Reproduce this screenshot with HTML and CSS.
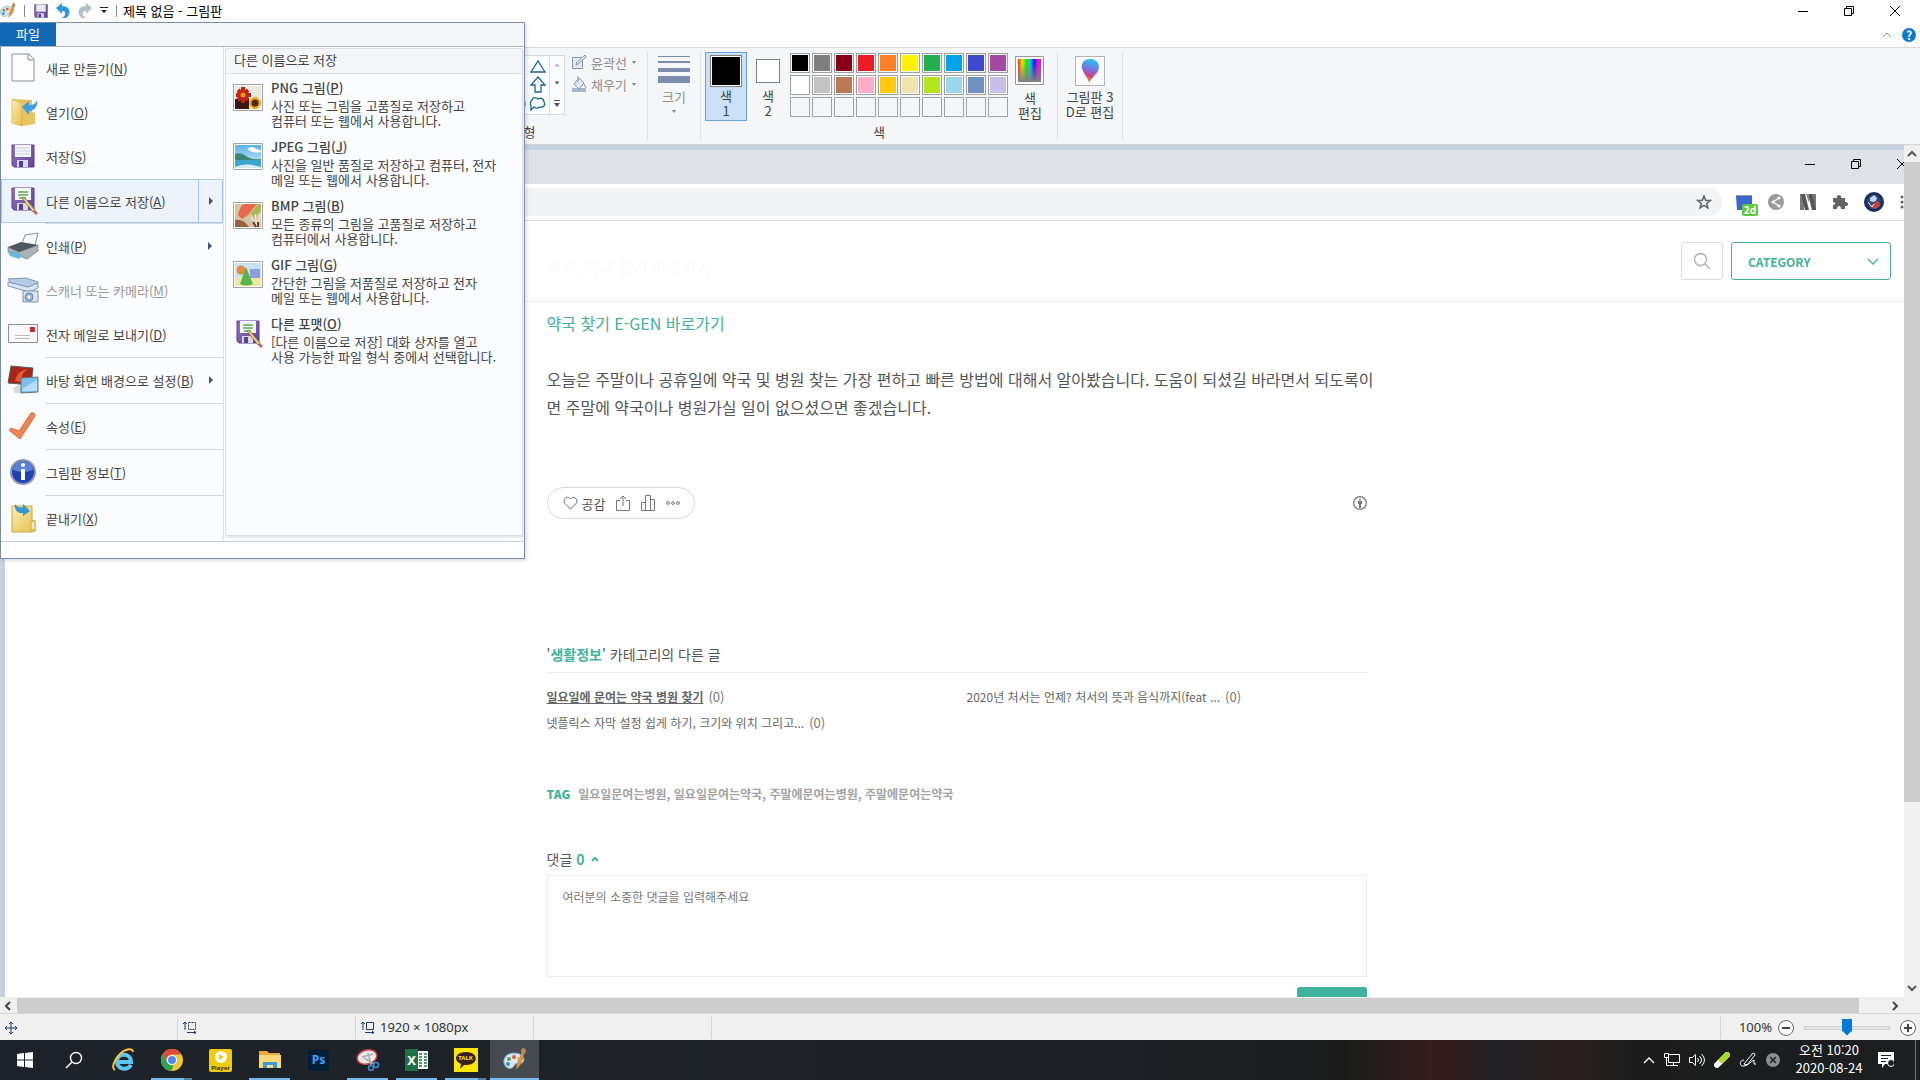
FILE: index.html
```
<!DOCTYPE html>
<html lang="ko">
<head>
  <meta charset="UTF-8" />
  <meta name="viewport" content="width=device-width, initial-scale=1" />
  <title>제목 없음 - 그림판</title>
  <link rel="stylesheet" href="styles.css">
</head>
<body>
  <!-- shared icons -->
  <svg class="defs" aria-hidden="true">
    <defs>
      <linearGradient id="violet" x1="0" y1="0" x2="1" y2="1">
        <stop offset="0" stop-color="#9474bd" /><stop offset="1" stop-color="#60449a" />
      </linearGradient>
      <linearGradient id="yellow" x1="0" y1="0" x2="1" y2="1">
        <stop offset="0" stop-color="#fbeeb0" /><stop offset="1" stop-color="#e5bf50" />
      </linearGradient>
      <linearGradient id="sky" x1="0" y1="0" x2="0" y2="1">
        <stop offset="0" stop-color="#5ab2e6" /><stop offset="1" stop-color="#d9f1fa" />
      </linearGradient>
      <linearGradient id="rainbow">
        <stop offset="0" stop-color="#f03020" /><stop offset=".18" stop-color="#f0e000" />
        <stop offset=".36" stop-color="#20e020" /><stop offset=".54" stop-color="#10c8d8" />
        <stop offset=".7" stop-color="#1818f0" /><stop offset=".88" stop-color="#f010e0" />
        <stop offset="1" stop-color="#f02060" />
      </linearGradient>
      <linearGradient id="fade" x1="0" y1="0" x2="0" y2="1">
        <stop offset=".2" stop-color="#808080" stop-opacity="0" /><stop offset="1" stop-color="#808080" />
      </linearGradient>
      <linearGradient id="drop" x1=".6" y1="0" x2=".4" y2="1">
        <stop offset="0" stop-color="#20c8f0" /><stop offset=".45" stop-color="#7a70e0" />
        <stop offset=".7" stop-color="#d04080" /><stop offset="1" stop-color="#f8a020" />
      </linearGradient>
      <symbol id="floppy" viewBox="0 0 24 24">
        <path d="M1 1h22v22H3l-2-2z" fill="url(#violet)" stroke="#5a3f91" />
        <path d="M4 1h16v12H4z" fill="#f3f5f8" />
        <path d="M5 4h14M5 7h14M5 10h14" stroke="#ccd2dc" />
        <path d="M6 16h11v7H6z" fill="#d8d8e2" />
        <path d="M8 17h4v6H8z" fill="#5a3f91" />
      </symbol>
      <symbol id="floppy-pen" viewBox="0 0 28 28">
        <path d="M1 1h22v22H3l-2-2z" fill="url(#violet)" stroke="#5a3f91" />
        <path d="M4 1h16v12H4z" fill="#f3f5f8" />
        <path d="M7 5h10M7 8h10M8 11h7" stroke="#5cae4a" stroke-width="1.5" />
        <path d="M6 16h11v7H6z" fill="#d8d8e2" />
        <path d="M8 17h4v6H8z" fill="#5a3f91" />
        <path d="M11 11l3 0 10 12-2 2z" fill="#f3d27a" stroke="#75603a" stroke-width=".7" />
        <path d="M22 25l2-2 3 3-2 2z" fill="#c86070" />
      </symbol>
      <symbol id="paint" viewBox="0 0 24 24">
        <path d="M11 5C4 5 0 10 1 15c1 6 8 7 10 3 1-3 3-2 6-2 6-1 6-11-6-11z" fill="#d5e8f3" stroke="#7ba6c0" />
        <circle cx="6" cy="11" r="2" fill="#4aa845" /><circle cx="11" cy="9" r="2" fill="#e25a3c" />
        <circle cx="5" cy="16" r="2" fill="#3a88d0" /><circle cx="16" cy="11" r="2" fill="#f0b030" />
        <path d="M19 2l3 1-3 9c-1 5-4 8-6 9 1-3 1-7 4-10z" fill="#e9973b" stroke="#a96b2e" stroke-width=".6" />
        <path d="M18 3q0-3 3-3 2 1 2 4l-3 3z" fill="#b98b5a" />
      </symbol>
      <symbol id="restore" viewBox="0 0 12 12">
        <path d="M1.500 3.500h7v7h-7zM3.500 3.500v-2h7v7h-2" fill="none" stroke="#000" />
      </symbol>
      <symbol id="minimize" viewBox="0 0 12 12"><path d="M1 6.500h10" stroke="#000" /></symbol>
      <symbol id="close" viewBox="0 0 12 12"><path d="M1 1l10 10M11 1L1 11" stroke="#000" /></symbol>
      <symbol id="down" viewBox="0 0 8 4"><path d="M1 0h6L4 4z" fill="currentColor" /></symbol>
      <symbol id="right" viewBox="0 0 4 8"><path d="M0 0v8l4-4z" fill="#44546a" /></symbol>
    </defs>
  </svg>

  <header class="titlebar">
    <div class="quick">
      <svg class="app-icon" viewBox="0 0 24 24"><use href="#paint" /></svg>
      <span class="bar"></span>
      <button aria-label="저장"><svg width="14" height="14"><use href="#floppy" /></svg></button>
      <button aria-label="실행 취소"><svg width="14" height="15" viewBox="0 0 14 15"><path d="M0 5l6-5v3c8 0 10 8 4 12H5c6-2 5-8 1-7v3z" fill="#2f97dc" /></svg></button>
      <button aria-label="다시 실행"><svg width="14" height="15" viewBox="0 0 14 15"><path d="M14 5L8 0v3C0 3-2 11 4 15h5C3 13 4 7 8 8v3z" fill="#b3bfcb" /></svg></button>
      <button aria-label="사용자 지정"><svg width="8" height="7" viewBox="0 0 8 7"><path d="M0 .5h8" stroke="#222" /><path d="M1 3h6L4 6z" fill="#222" /></svg></button>
      <span class="bar"></span>
    </div>
    <h1>제목 없음 - 그림판</h1>
    <div class="window-buttons">
      <button aria-label="최소화"><svg width="12" height="12"><use href="#minimize" /></svg></button>
      <button aria-label="이전 크기로"><svg width="12" height="12"><use href="#restore" /></svg></button>
      <button aria-label="닫기"><svg width="12" height="12"><use href="#close" /></svg></button>
    </div>
  </header>

  <div class="tabs">
    <svg width="10" height="6" viewBox="0 0 10 6"><path d="M1 5l4-4 4 4" fill="none" stroke="#8a8a8a" /></svg>
    <button class="help">?</button>
  </div>

  <section class="ribbon">
    <div class="group shapes">
      <div class="group-body">
        <div class="gallery">
          <svg width="125" height="58" viewBox="0 0 125 58" fill="#f4faff" stroke="#1f639b" stroke-width="1.3">
            <path d="M85 10h15v7H85zM85 25h15v9H85z" />
            <circle cx="94" cy="48" r="7" />
            <path d="M107 16h14L114 5zM114 21l7 8h-4v7h-6v-7h-4zM108 44c1-3 4-3 6-1 3-2 6 0 6 3 2 3-1 6-4 5-3 2-5 1-6 0l-3 3v-4c-1-2-1-4 1-6z" />
          </svg>
          <div class="gallery-scroll">
            <svg class="faint" width="6" height="4" viewBox="0 0 8 4"><path d="M0 4h8L4 0z" fill="currentColor" /></svg>
            <svg width="6" height="4"><use href="#down" /></svg>
            <svg width="6" height="7" viewBox="0 0 6 7"><path d="M0 .5h6" stroke="currentColor" /><path d="M0 3h6L3 7z" fill="currentColor" /></svg>
          </div>
        </div>
        <div class="shape-options">
          <button disabled><svg width="16" height="16" viewBox="0 0 16 16" fill="#e4e9f0" stroke="#8794a8"><path d="M1.500 3.500h10v11h-10z" /><path d="M5 11l1-3 8-7 1 2-8 7z" /></svg>윤곽선<svg width="6" height="3"><use href="#down" /></svg></button>
          <button disabled><svg width="16" height="16" viewBox="0 0 16 16"><path d="M1 12h14v4H1z" fill="#a8b4c8" /><path d="M3 8l5-6 5 5-5 6z" fill="#e4e9f0" stroke="#8794a8" /><path d="M7 0v6M13 8l2 4" stroke="#8794a8" /></svg>채우기<svg width="6" height="3"><use href="#down" /></svg></button>
        </div>
      </div>
      <p class="group-name">도형</p>
    </div>

    <div class="group size">
      <button class="tool" disabled>
        <svg width="32" height="28" viewBox="0 0 32 28" fill="#7c8daf"><path d="M0 0h32v1H0zM0 5h32v2H0zM0 12h32v4H0zM0 20h32v7H0z" /></svg>
        <span>크기</span>
        <svg class="size-arrow" width="6" height="3"><use href="#down" /></svg>
      </button>
    </div>

    <div class="group colors">
      <div class="group-body">
        <button class="color-pick active"><i class="swatch black"></i><span>색<br>1</span></button>
        <button class="color-pick"><i class="swatch white"></i><span>색<br>2</span></button>
        <div class="palette" id="palette"></div>
        <button class="tool">
          <svg width="30" height="30" viewBox="0 0 30 30"><path d="M.5.5h28v28H.5z" fill="#fff" stroke="#999" /><path d="M3 3h23v23H3z" fill="url(#rainbow)" /><path d="M3 3h23v23H3z" fill="url(#fade)" /></svg>
          <span>색<br>편집</span>
        </button>
      </div>
      <p class="group-name">색</p>
    </div>

    <div class="group paint3d">
      <button class="tool">
        <svg width="30" height="30" viewBox="0 0 30 30"><path d="M.5.5h29v29H.5z" fill="#fbfbfb" stroke="#b4b4b4" /><path d="M15 3c10 0 11 10 6 15-3 3-5 5-7 9-1-5-3-6-5-10C4 9 8 3 15 3z" fill="url(#drop)" /></svg>
        <span>그림판 3<br>D로 편집</span>
      </button>
    </div>
  </section>

  <main class="workspace">
    <div class="canvas">
      <div class="browser">
        <div class="browser-title">
          <svg width="12" height="12"><use href="#minimize" /></svg>
          <svg width="12" height="12"><use href="#restore" /></svg>
          <svg width="12" height="12"><use href="#close" /></svg>
        </div>
        <div class="browser-tools">
          <div class="address">
            <svg width="16" height="16" viewBox="0 0 16 16"><path d="M8 2l1.700 4.200 4.500.3-3.500 2.900 1.200 4.400L8 11.400l-3.900 2.400 1.200-4.400L1.800 6.500l4.500-.3z" fill="none" stroke="#5f6368" stroke-width="1.500" /></svg>
          </div>
          <div class="extensions">
            <span class="ext-date">
              <svg width="16" height="16" viewBox="0 0 16 16"><path d="M0 2h16v14H1z" fill="#3867d0" /><path d="M0 1h16v1H0z" fill="#999" /></svg>
              <b>2d</b>
            </span>
            <svg width="16" height="16" viewBox="0 0 16 16"><circle cx="8" cy="8" r="8" fill="#9b9b9b" /><path d="M11 4L5 8l6 4" fill="none" stroke="#fff" stroke-width="1.300" /><g fill="#fff"><circle cx="11" cy="4" r="1.500" /><circle cx="5" cy="8" r="1.500" /><circle cx="11" cy="12" r="1.500" /></g></svg>
            <svg width="16" height="16" viewBox="0 0 16 16"><path d="M0 0h4v16H0zM12 0h4v16h-4z" fill="#777" /><path d="M1 0h4l4 16H5zM8 0h4l4 16h-4z" fill="#555" /><path d="M6 0h3v9z" fill="#888" /></svg>
            <svg width="16" height="16" viewBox="0 0 16 16"><path d="M1 4h4c-1-4 5-4 4 0h4v4c4-1 4 5 0 4v3H9c0-4-4-4-4 0H1v-4c3 0 3-3 0-3z" fill="#5f6368" /></svg>
            <svg width="20" height="20" viewBox="0 0 20 20"><circle cx="10" cy="10" r="10" fill="#17305f" /><circle cx="10" cy="10" r="7" fill="#28497e" /><path d="M6 6l4-3 3 3-1 3-3 1-3-1z" fill="#c9d6ea" /><path d="M10 11l5-2 1 5-5 3-5-2z" fill="#c8453f" /><path d="M4 10l4 5 2-3" fill="none" stroke="#dfe7f2" /></svg>
            <svg width="4" height="16" viewBox="0 0 4 16" fill="#5f6368"><circle cx="2" cy="3" r="1.500" /><circle cx="2" cy="8" r="1.500" /><circle cx="2" cy="13" r="1.500" /></svg>
          </div>
        </div>

        <div class="blog-header">
          <p class="blog-title">병원, 약국 찾기 바로가기</p>
          <div class="blog-nav">
            <button class="search" aria-label="검색"><svg width="18" height="18" viewBox="0 0 18 18" fill="none" stroke="#aaa" stroke-width="1.300"><circle cx="7.500" cy="7.500" r="6" /><path d="M12 12l5 5" /></svg></button>
            <label class="category">
              <select aria-label="카테고리"><option>CATEGORY</option></select>
              <svg width="12" height="8" viewBox="0 0 12 8"><path d="M1 1l5 5 5-5" fill="none" stroke="#42b299" stroke-width="1.300" /></svg>
            </label>
          </div>
        </div>

        <article class="post">
          <a class="post-link" href="#">약국 찾기 E-GEN 바로가기</a>
          <p class="post-text">오늘은 주말이나 공휴일에 약국 및 병원 찾는 가장 편하고 빠른 방법에 대해서 알아봤습니다. 도움이 되셨길 바라면서 되도록이<br>면 주말에 약국이나 병원가실 일이 없으셨으면 좋겠습니다.</p>

          <div class="post-actions">
            <div class="pill">
              <button><svg width="15" height="14" viewBox="0 0 15 14"><path d="M7.500 13L2 7.500C-1 4 4-1.500 7.500 3 11-1.500 16 4 13 7.500z" fill="none" stroke="#666" /></svg>공감</button>
              <button aria-label="공유"><svg width="14" height="16" viewBox="0 0 14 16" fill="none" stroke="#777"><path d="M4 5.500H.5v10h13v-10H10M7 11V1M4 4l3-3 3 3" /></svg></button>
              <button aria-label="통계"><svg width="14" height="16" viewBox="0 0 14 16" fill="none" stroke="#777"><path d="M.5 7.500h4v8h-4zM4.500.5h5v15h-5zM9.500 4.500h4v11h-4z" /></svg></button>
              <button aria-label="더보기"><svg width="14" height="4" viewBox="0 0 14 4" fill="none" stroke="#777"><circle cx="2" cy="2" r="1.400" /><circle cx="7" cy="2" r="1.400" /><circle cx="12" cy="2" r="1.400" /></svg></button>
            </div>
            <svg width="14" height="14" viewBox="0 0 14 14"><circle cx="7" cy="7" r="6.300" fill="none" stroke="#777" stroke-width="1.300" /><circle cx="7" cy="3.500" r="1" fill="#777" /><path d="M5 5h4v3H8v4H6V8H5z" fill="#777" /></svg>
          </div>

          <h2 class="related-title">'<b>생활정보</b>' 카테고리의 다른 글</h2>
          <ul class="related">
            <li><a class="current" href="#">일요일에 문여는 약국 병원 찾기</a><span>(0)</span></li>
            <li><a href="#">2020년 처서는 언제? 처서의 뜻과 음식까지(feat ...</a><span>(0)</span></li>
            <li><a href="#">넷플릭스 자막 설정 쉽게 하기, 크기와 위치 그리고...</a><span>(0)</span></li>
          </ul>

          <p class="tags"><b>TAG</b>일요일문여는병원, 일요일문여는약국, 주말에문여는병원, 주말에문여는약국</p>

          <form class="comments">
            <label for="comment">댓글 <b>0</b> <svg width="8" height="6" viewBox="0 0 8 6"><path d="M1 5l3-3 3 3" fill="none" stroke="#42b299" stroke-width="2" /></svg></label>
            <textarea id="comment" placeholder="여러분의 소중한 댓글을 입력해주세요"></textarea>
            <button type="submit" aria-label="댓글 등록"></button>
          </form>
        </article>
      </div>
    </div>
    <div class="vscroll">
      <svg width="16" height="17" viewBox="0 0 16 17"><path d="M4 11l4-4 4 4" fill="none" stroke="#555" stroke-width="2" /></svg>
      <div class="thumb"></div>
      <svg width="16" height="17" viewBox="0 0 16 17"><path d="M4 6l4 4 4-4" fill="none" stroke="#555" stroke-width="2" /></svg>
    </div>
  </main>

  <div class="hscroll">
    <svg width="17" height="15" viewBox="0 0 17 15"><path d="M10 4L6 8l4 4" fill="none" stroke="#444" stroke-width="2" /></svg>
    <div class="thumb"></div>
    <svg width="17" height="15" viewBox="0 0 17 15"><path d="M6 4l4 4-4 4" fill="none" stroke="#444" stroke-width="2" /></svg>
  </div>

  <footer class="status">
    <div class="cell"><svg width="12" height="12" viewBox="0 0 12 12" fill="none" stroke="#1f3864"><path d="M6 0v12M0 6h12M4 2l2-2 2 2M4 10l2 2 2-2M2 4L0 6l2 2M10 4l2 2-2 2" /></svg></div>
    <div class="cell"><svg width="14" height="13" viewBox="0 0 14 13" fill="none" stroke="#1f3864"><path d="M2 9V1M0 3l2-2 2 2M4 11.500h9M11 10l2 1.500-2 1.500" /><path d="M5.500 1.500h7v7h-7z" stroke-dasharray="2 1" /></svg></div>
    <div class="cell"><svg width="14" height="13" viewBox="0 0 14 13" fill="none" stroke="#1f3864"><path d="M2 9V1M0 3l2-2 2 2M4 11.500h9M11 10l2 1.500-2 1.500M5.500 1.500h7v7h-7z" /></svg>1920 × 1080px</div>
    <div class="cell"></div>
    <div class="zoom">
      <label for="zoom">100%</label>
      <button type="button" aria-label="축소"><svg width="16" height="16" viewBox="0 0 16 16"><circle cx="8" cy="8" r="7.500" fill="#fafafa" stroke="#666" /><path d="M4 8h8" stroke="#444" stroke-width="2" /></svg></button>
      <input type="range" id="zoom" min="0" max="100" value="50">
      <button type="button" aria-label="확대"><svg width="16" height="16" viewBox="0 0 16 16"><circle cx="8" cy="8" r="7.500" fill="#fafafa" stroke="#666" /><path d="M4 8h8M8 4v8" stroke="#444" stroke-width="2" /></svg></button>
    </div>
  </footer>

  <nav class="taskbar">
    <div class="tasks">
      <button aria-label="시작"><svg width="16" height="16" viewBox="0 0 16 16" fill="#fff"><path d="M0 2l7-1v6.500H0zM8 1l8-1v7.500H8zM0 8.500h7V15l-7-1zM8 8.500h8V16l-8-1z" /></svg></button>
      <button aria-label="검색"><svg width="18" height="18" viewBox="0 0 18 18" fill="none" stroke="#fff" stroke-width="1.400"><circle cx="11" cy="7" r="5.500" /><path d="M7 11l-6 6" /></svg></button>
      <button aria-label="Internet Explorer"><svg width="24" height="24" viewBox="0 0 24 24" fill="none"><path d="M20 17c-3 6-14 5-14-4 0-8 14-9 14 1H7" stroke="#5cc4f2" stroke-width="4" /><path d="M4 22C0 20 3 12 9 6S22 0 22 4" stroke="#f4c430" stroke-width="2" /></svg></button>
      <button class="open more" aria-label="Chrome"><svg width="22" height="22" viewBox="0 0 22 22"><circle cx="11" cy="11" r="11" fill="#f4c534" /><path d="M1.500 5.500a11 11 0 0 1 19 0H11a5.500 5.500 0 0 0-5 8z" fill="#dd4b3e" /><path d="M1.500 5.500l5 8.500a5 5 0 0 0 6 2L10.500 22A11 11 0 0 1 1.500 5.500z" fill="#2da05a" /><circle cx="11" cy="11" r="5" fill="#fff" /><circle cx="11" cy="11" r="4" fill="#4c8bf5" /></svg></button>
      <button aria-label="Player"><span class="player"><svg width="12" height="12" viewBox="0 0 12 12"><circle cx="6" cy="6" r="6" fill="#fff" /><path d="M4 3v6l5-3z" fill="#f5c900" /></svg>Player</span></button>
      <button class="open" aria-label="파일 탐색기"><svg width="22" height="20" viewBox="0 0 22 20"><path d="M0 1h8l2 2h11v15H0z" fill="#e9a93a" /><path d="M0 5h22v13H0z" fill="#fbd978" /><path d="M4 18v-6h14v6h-4v-3H8v3z" fill="#3f9bd8" /></svg></button>
      <button aria-label="Photoshop"><span class="ps">Ps</span></button>
      <button class="open" aria-label="캡처 도구"><svg width="24" height="24" viewBox="0 0 24 24"><ellipse cx="11" cy="9" rx="10" ry="7" transform="rotate(-15 11 9)" fill="#ece9ea" stroke="#d23a46" stroke-width="1.500" /><path d="M6 9l11-3M12 5l3 12M8 10l10 6" stroke="#aaa" stroke-width="1.500" /><circle cx="15" cy="20" r="2.500" fill="none" stroke="#3a8ed0" stroke-width="1.500" /><circle cx="20" cy="17" r="2.500" fill="none" stroke="#3a8ed0" stroke-width="1.500" /></svg></button>
      <button class="open" aria-label="Excel"><span class="excel"><b>X</b><svg width="10" height="18" viewBox="0 0 10 18"><path d="M0 0h10v18H0z" fill="#fff" /><path d="M1 3h3M6 3h3M1 6h3M6 6h3M1 9h3M6 9h3M1 12h3M6 12h3M1 15h3M6 15h3" stroke="#1f7244" stroke-width="1.500" /></svg></span></button>
      <button class="open more" aria-label="카카오톡"><span class="talk"><svg width="20" height="17" viewBox="0 0 20 17"><path d="M10 0c13 0 13 13 0 13h-2l-4 4 1-5C-4 8 0 0 10 0z" fill="#3b1e1e" /></svg><b>TALK</b></span></button>
      <button class="open active" aria-label="그림판"><svg width="24" height="24"><use href="#paint" /></svg></button>
    </div>
    <div class="tray">
      <svg width="12" height="8" viewBox="0 0 12 8"><path d="M1 7l5-5 5 5" fill="none" stroke="#fff" stroke-width="1.300" /></svg>
      <svg width="16" height="14" viewBox="0 0 16 14" fill="none" stroke="#fff"><path d="M4.500 1.500h11v8h-11zM9.500 9.500v3M6 12.500h8M.5.500h4v4h-4zM2.500 4.500v8h3" /></svg>
      <svg width="16" height="14" viewBox="0 0 16 14" fill="none" stroke="#fff"><path d="M.5 4.500h3l3-3v11l-3-3h-3zM8.500 5q2 2 0 4M10.500 3q4 4 0 8M12.500 1q6 6 0 12" /></svg>
      <svg width="16" height="16" viewBox="0 0 16 16"><path d="M3 13L13 3" stroke="#f4f4f4" stroke-width="6" stroke-linecap="round" /><path d="M8 8l5-5" stroke="#a4dc28" stroke-width="6" stroke-linecap="round" /></svg>
      <svg width="18" height="16" viewBox="0 0 18 16" fill="none" stroke="#fff"><path d="M5 12L13 2q3-2 3 1L8 13zM5 8c-5 0-5 7 0 6s6-4 10-6v4h2" /></svg>
      <svg width="14" height="14" viewBox="0 0 14 14"><circle cx="7" cy="7" r="7" fill="#8d8f92" /><path d="M4 4l6 6M10 4l-6 6" stroke="#1e2124" stroke-width="1.500" /></svg>
      <time datetime="2020-08-24T10:20">오전 10:20<br>2020-08-24</time>
      <svg width="16" height="16" viewBox="0 0 16 16"><path d="M0 0h16v12H7l-3 4v-4H0z" fill="#fff" /><path d="M3 3.500h10M3 6.500h7M3 9.500h5" stroke="#1c1e20" /><circle cx="13" cy="11" r="3.500" fill="#1c1e20" stroke="#fff" /></svg>
      <span class="desktop"></span>
    </div>
  </nav>

  <!-- file menu, opened over the window -->
  <div class="file-menu">
    <div class="file-head"><button>파일</button></div>
    <div class="file-body">
      <ul class="commands">
        <li><button><svg width="32" height="30" viewBox="0 0 32 30"><path d="M5 1h17l5 5v22H5z" fill="#fdfdfd" stroke="#8e9296" /><path d="M21 1v6h6" fill="#eee" stroke="#8e9296" /></svg><span>새로 만들기(<u>N</u>)</span></button></li>
        <li><button><svg width="32" height="30" viewBox="0 0 32 30"><path d="M5 2l20 1v12l3 1v11l-13 2z" fill="#e7c45c" /><path d="M5 2l10 4v23L5 26z" fill="url(#yellow)" stroke="#c9a246" stroke-width=".6" /><path d="M15 10l7-6v4c5 0 7-2 8-5 1 7-3 11-8 11v4z" fill="#3f9fe0" /></svg><span>열기(<u>O</u>)</span></button></li>
        <li><button><svg width="32" height="24" viewBox="-4 0 32 24"><use href="#floppy" width="24" height="24" /></svg><span>저장(<u>S</u>)</span></button></li>
        <li class="open"><button><svg width="32" height="28" viewBox="-4 0 32 28"><use href="#floppy-pen" width="28" height="28" /></svg><span>다른 이름으로 저장(<u>A</u>)</span><span class="arrow"><svg width="4" height="8"><use href="#right" /></svg></span></button></li>
        <li class="divided"><button><svg width="32" height="28" viewBox="0 0 32 28"><path d="M18 3l13-2-3 12-13-1z" fill="#f5f7f8" stroke="#8d9499" /><path d="M1 15l13-5 17 3-5 7-14 4z" fill="#50575c" /><path d="M1 15l11 5 19-7v6l-11 8L1 20z" fill="#aab3b8" stroke="#656d72" stroke-width=".6" /><path d="M1 20l6-1 8 4-3 4-9-3z" fill="#6fb4dc" /></svg><span>인쇄(<u>P</u>)</span><span class="arrow"><svg width="4" height="8"><use href="#right" /></svg></span></button></li>
        <li><button disabled><svg width="32" height="28" viewBox="0 0 32 28"><path d="M1 3l18-1 12 4-7 6L4 7z" fill="#b4cbe5" stroke="#8298b8" /><path d="M1 6l20 5 10-4v5l-9 4L1 10z" fill="#dbe5f0" stroke="#8298b8" /><path d="M16 15h15v11H16z" fill="#d8e3f0" stroke="#7e92b0" /><circle cx="22" cy="21" r="4" fill="#9db5d4" stroke="#6b83a8" /><circle cx="22" cy="21" r="1.500" fill="#fff" /></svg><span>스캐너 또는 카메라(<u>M</u>)</span></button></li>
        <li><button><svg width="32" height="20" viewBox="0 0 32 20"><path d="M1.500.5h29v18h-29z" fill="#fafafa" stroke="#8b8f94" /><path d="M23 3h5v5h-5z" fill="#cc2939" /><path d="M8 11.500h15M8 14.500h15" stroke="#bbb" /></svg><span>전자 메일로 보내기(<u>D</u>)</span></button></li>
        <li class="divided"><button><svg width="32" height="30" viewBox="0 0 32 30"><path d="M4 1l22 2-2 17-23-2z" fill="#a82619" stroke="#56606b" /><path d="M8 16c2-8 6-11 13-12-5 3-7 7-6 13z" fill="#e25a33" /><path d="M6 23l6-3 5 6-3 2H8z" fill="#d5dade" /><path d="M14 13l17-1v15l-17 1z" fill="#79c0f0" stroke="#66717b" /><path d="M15 24l15-9v11H15z" fill="#b5defa" /></svg><span>바탕 화면 배경으로 설정(<u>B</u>)</span><span class="arrow"><svg width="4" height="8"><use href="#right" /></svg></span></button></li>
        <li class="divided"><button><svg width="32" height="30" viewBox="0 0 32 30"><path d="M4 17q-2 1-1 3l10 8 15-23q0-4-4-3L12 20z" fill="#ee8658" stroke="#d9683a" /></svg><span>속성(<u>E</u>)</span></button></li>
        <li class="divided"><button><svg width="32" height="28" viewBox="0 0 32 28"><circle cx="16" cy="14" r="12" fill="#1e43b4" stroke="#8b98ae" stroke-width="2" /><path d="M6 12a10 9 0 0 1 20 0q-10 4-20 0z" fill="#5b80d8" /><circle cx="16" cy="7" r="2" fill="#fff" /><path d="M14 11h4v11h-4z" fill="#fff" /></svg><span>그림판 정보(<u>T</u>)</span></button></li>
        <li class="divided"><button><svg width="32" height="30" viewBox="0 0 32 30"><path d="M5 3h20v14l3 1v10l-3 1H5z" fill="url(#yellow)" stroke="#cda83e" /><path d="M24 18h4v9h-4z" fill="#f7ebb7" stroke="#cda83e" /><path d="M8 1c2 3 5 4 8 3V1l7 7-7 5v-3C11 11 7 7 8 1z" fill="#3795cf" /></svg><span>끝내기(<u>X</u>)</span></button></li>
      </ul>
      <div class="submenu">
        <h2>다른 이름으로 저장</h2>
        <button>
          <svg width="30" height="28" viewBox="0 0 30 28"><path d="M.5.500h29v26H.5z" fill="#fff" stroke="#a3a3a3" /><path d="M2 2h26v23H2z" fill="#e9ebe2" /><path d="M2 15h14v10H2z" fill="#3a1712" /><g stroke="#bf2414" stroke-width="4"><path d="M10 3v16M3 11h15M5 6l10 10M15 6L5 16" /></g><circle cx="10" cy="11" r="2.500" fill="#e49b26" /><g stroke="#f2a51f" stroke-width="4"><path d="M22 13v12M16 19h12M18 15l8 8M26 15l-8 8" /></g><circle cx="22" cy="19" r="3.500" fill="#4b2914" /></svg>
          <span><b>PNG 그림(<u>P</u>)</b>사진 또는 그림을 고품질로 저장하고<br>컴퓨터 또는 웹에서 사용합니다.</span>
        </button>
        <button>
          <svg width="30" height="28" viewBox="0 0 30 28"><path d="M.5.500h29v26H.5z" fill="#fff" stroke="#a3a3a3" /><path d="M2 2h26v23H2z" fill="url(#sky)" /><path d="M14 6q5-4 9 0 4 0 5 3-8 2-14-3z" fill="#fff" /><path d="M2 11q6-2 11 2t15 3v2H2z" fill="#3a8574" /><path d="M2 17h26v8H2z" fill="#3aa7cc" /><path d="M2 24q10-5 26 0v1H2z" fill="#d7eeee" /></svg>
          <span><b>JPEG 그림(<u>J</u>)</b>사진을 일반 품질로 저장하고 컴퓨터, 전자<br>메일 또는 웹에서 사용합니다.</span>
        </button>
        <button>
          <svg width="30" height="28" viewBox="0 0 30 28"><path d="M.5.500h29v26H.5z" fill="#fff" stroke="#a3a3a3" /><path d="M2 2h26v23H2z" fill="#d3c5a5" /><path d="M5 13C7 5 9 2 12 2h12l-9 11-6 4z" fill="#e8694c" /><path d="M16 14l9-12h3v7l-8 7z" fill="#a9b653" /><path d="M2 18q8-2 14 7H2z" fill="#9b6040" /><path d="M18 13l4 11M22 12l2 12M27 12l-2 12" stroke="#f2ead9" stroke-width="1.500" /><path d="M20 20l3 5M25 20v5" stroke="#72332a" stroke-width="2" /></svg>
          <span><b>BMP 그림(<u>B</u>)</b>모든 종류의 그림을 고품질로 저장하고<br>컴퓨터에서 사용합니다.</span>
        </button>
        <button>
          <svg width="30" height="28" viewBox="0 0 30 28"><path d="M.5.500h29v26H.5z" fill="#fff" stroke="#a3a3a3" /><path d="M2 2h26v23H2z" fill="#c9e2f3" /><path d="M2 16h26v9H2z" fill="#ebe7a5" /><path d="M17 8h10v9H17z" fill="#8e9be0" /><circle cx="8" cy="9" r="4.500" fill="#e58a3c" /><path d="M13 6l7 17q-7 3-13 0z" fill="#5bb447" /></svg>
          <span><b>GIF 그림(<u>G</u>)</b>간단한 그림을 저품질로 저장하고 전자<br>메일 또는 웹에서 사용합니다.</span>
        </button>
        <button>
          <svg width="30" height="28" viewBox="-3 0 30 28"><use href="#floppy-pen" width="28" height="28" /></svg>
          <span><b>다른 포맷(<u>O</u>)</b>[다른 이름으로 저장] 대화 상자를 열고<br>사용 가능한 파일 형식 중에서 선택합니다.</span>
        </button>
      </div>
    </div>
    <div class="file-foot"></div>
  </div>

  <script>
    const colors = [
      '#000000', '#7f7f7f', '#880015', '#ed1c24', '#ff7f27', '#fff200', '#22b14c', '#00a2e8', '#3f48cc', '#a349a4',
      '#ffffff', '#c3c3c3', '#b97a57', '#ffaec9', '#ffc90e', '#efe4b0', '#b5e61d', '#99d9ea', '#7092be', '#c8bfe7'
    ];
    const palette = document.getElementById('palette');

    for (let i = 0; i < 30; i++) {
      const cell = document.createElement('button');
      cell.setAttribute('aria-label', colors[i] || '사용자 지정 색');
      cell.style.backgroundColor = colors[i] || 'transparent';
      palette.appendChild(cell);
    }
  </script>
</body>
</html>
```
FILE: styles.css
```
* {
  box-sizing: border-box;
}

body {
  display: flex;
  flex-direction: column;
  height: 100vh;
  margin: 0;
  overflow: hidden;
  background: #fff;
  color: #444;
  font-family: "Noto Sans CJK KR", "Noto Sans", sans-serif;
  font-size: 13px;
  line-height: 15px;
}

h1, h2, p, ul {
  margin: 0;
  padding: 0;
  font-size: inherit;
  font-weight: normal;
}

ul {
  list-style: none;
}

button {
  margin: 0;
  padding: 0;
  border: 0;
  background: none;
  color: inherit;
  font: inherit;
}

svg {
  display: block;
  flex: none;
}

.defs {
  position: absolute;
  width: 0;
  height: 0;
}

/* title bar */
.titlebar {
  display: flex;
  align-items: center;
  flex: none;
  height: 23px;
  padding: 0 19px 2px 0;
  color: #000;
}

.quick {
  display: flex;
  align-items: center;
  gap: 8px;
  margin-right: 5px;
}

.app-icon {
  width: 16px;
  height: 16px;
}

.bar {
  width: 1px;
  height: 12px;
  margin-right: 1px;
  background: #888;
}

.window-buttons {
  display: flex;
  gap: 34px;
  margin-left: auto;
}

.tabs {
  display: flex;
  align-items: center;
  justify-content: flex-end;
  flex: none;
  gap: 10px;
  height: 24px;
  padding-right: 4px;
}

.help {
  width: 14px;
  height: 14px;
  border-radius: 50%;
  background: #0a78cf;
  color: #fff;
  font-size: 12px;
  font-weight: bold;
  line-height: 14px;
}

/* ribbon */
.ribbon {
  display: flex;
  flex: none;
  height: 98px;
  padding: 3px 0 3px 400px;
  border-top: 1px solid #dadbdc;
  border-bottom: 1px solid #d4d7da;
  background: #f5f6f7;
}

.group {
  display: flex;
  flex-direction: column;
  align-items: center;
  justify-content: space-between;
  border-right: 1px solid #e2e3e4;
}

.group-body {
  display: flex;
}

.group-name {
  line-height: 19px;
}

.shapes {
  width: 248px;
}

.shapes .group-body {
  align-self: flex-end;
}

.gallery {
  display: flex;
  height: 60px;
  margin-top: 4px;
  border: 1px solid #dadbdc;
  background: #fbfcfd;
}

.gallery-scroll {
  display: flex;
  flex-direction: column;
  align-items: center;
  justify-content: space-around;
  width: 15px;
  border-left: 1px solid #dadbdc;
  color: #44546a;
}

.faint {
  color: #b4b8bd;
}

.shape-options {
  display: flex;
  flex-direction: column;
  gap: 6px;
  margin: 3px 10px 0 6px;
}

.shape-options button {
  display: flex;
  align-items: center;
  gap: 4px;
  height: 16px;
  color: #8f8f8f;
}

.size {
  width: 53px;
}

.tool {
  display: flex;
  flex-direction: column;
  align-items: center;
  height: 68px;
  padding-top: 5px;
}

.tool:disabled {
  color: #8f8f8f;
}

.tool span {
  margin-top: auto;
}

.size-arrow {
  margin: 6px 0;
}

.colors {
  width: 357px;
}

.colors .group-body {
  align-self: flex-start;
  padding: 1px 0 0 4px;
}

.colors .tool {
  width: 30px;
  padding-top: 4px;
}

.color-pick {
  display: flex;
  flex-direction: column;
  align-items: center;
  justify-content: space-between;
  width: 42px;
  height: 69px;
  padding: 2px 0;
  border: 1px solid transparent;
}

.color-pick.active {
  border-color: #62a2e4;
  background: #c9e0f7;
}

.swatch {
  border: 1px solid #7d7d7d;
}

.swatch.black {
  width: 32px;
  height: 32px;
  background: #000;
  box-shadow: inset 0 0 0 1px #fff;
}

.swatch.white {
  width: 24px;
  height: 24px;
  margin-top: 4px;
  background: #fff;
}

.palette {
  display: grid;
  grid-template-columns: repeat(10, 20px);
  grid-auto-rows: 20px;
  gap: 2px;
  margin: 1px 7px 0 1px;
}

.palette button {
  border: 1px solid #a0a0a0;
  box-shadow: inset 0 0 0 1px #fafafa;
}

.paint3d {
  width: 65px;
}

/* drawing area with the pasted picture */
.workspace {
  display: flex;
  flex: 1;
  min-height: 0;
}

.canvas {
  flex: 1;
  min-width: 0;
  padding: 5px 0 0 5px;
  overflow: hidden;
  background: #c8d1e0;
}

.browser {
  height: 100%;
  margin-right: -4px;
  background: #fff;
}

.browser-title {
  display: flex;
  align-items: center;
  justify-content: flex-end;
  gap: 34px;
  height: 34px;
  padding-bottom: 6px;
  background: #dee1e6;
}

.browser-tools {
  display: flex;
  align-items: center;
  gap: 14px;
  height: 37px;
  padding: 4px 4px 4px 0;
  border-bottom: 1px solid #dcdcdc;
}

.address {
  display: flex;
  align-items: center;
  justify-content: flex-end;
  flex: 1;
  height: 28px;
  padding-right: 10px;
  border-radius: 0 14px 14px 0;
  background: #f1f3f4;
}

.extensions {
  display: flex;
  align-items: center;
  gap: 16px;
}

.ext-date {
  position: relative;
}

.ext-date b {
  position: absolute;
  top: 10px;
  left: 6px;
  width: 16px;
  border-radius: 2px;
  background: #5fca3b;
  color: #fff;
  font-size: 10px;
  line-height: 12px;
  text-align: center;
}

.blog-header {
  display: flex;
  align-items: center;
  justify-content: space-between;
  height: 81px;
  padding: 0 17px 0 541px;
  border-bottom: 1px solid #ebebeb;
}

.blog-title {
  padding-top: 12px;
  color: #fafafa;
  font-size: 16px;
  line-height: 28px;
}

.blog-nav {
  display: flex;
  gap: 8px;
}

.search {
  display: flex;
  align-items: center;
  justify-content: center;
  width: 42px;
  height: 38px;
  border: 1px solid #dcdcdc;
  border-radius: 3px;
}

.category {
  position: relative;
}

.category select {
  width: 160px;
  height: 38px;
  padding: 0 16px;
  border: 1px solid #42b299;
  border-radius: 3px;
  background: #fff;
  color: #42b299;
  font: bold 12px "Noto Sans CJK KR", sans-serif;
  appearance: none;
}

.category svg {
  position: absolute;
  top: 16px;
  right: 12px;
}

.post {
  max-width: 820px;
  margin: 0 auto;
  padding-top: 7px;
}

.post-link {
  display: block;
  color: #42b299;
  font-size: 16px;
  line-height: 28px;
  text-decoration: none;
}

.post-text {
  margin-top: 28px;
  color: #555;
  font-size: 16px;
  line-height: 28px;
  white-space: nowrap;
}

.post-actions {
  display: flex;
  align-items: center;
  justify-content: space-between;
  margin-top: 66px;
}

.pill {
  display: flex;
  align-items: center;
  gap: 11px;
  height: 32px;
  padding: 0 14px 0 15px;
  border: 1px solid #dadada;
  border-radius: 16px;
  color: #555;
}

.pill button {
  display: flex;
  align-items: center;
  gap: 4px;
}

.related-title {
  margin-top: 125px;
  padding-bottom: 8px;
  border-bottom: 1px solid #ebebeb;
  color: #555;
  font-size: 14px;
  line-height: 20px;
}

.related-title b,
.tags b,
.comments label b {
  color: #42b299;
}

.related {
  display: grid;
  grid-template-columns: 1fr 1fr;
  column-gap: 20px;
  margin-top: 11px;
  color: #777;
  font-size: 12px;
  line-height: 26px;
}

.related a {
  color: #666;
  text-decoration: none;
}

.related a.current {
  font-weight: bold;
  text-decoration: underline;
}

.related span {
  margin-left: 5px;
  font-size: 13px;
}

.tags {
  margin-top: 45px;
  color: #a3a3a3;
  font-size: 12px;
  font-weight: bold;
  line-height: 26px;
}

.tags b {
  margin-right: 8px;
}

.comments {
  display: flex;
  flex-direction: column;
  margin-top: 42px;
}

.comments label {
  display: flex;
  align-items: center;
  gap: 4px;
  color: #555;
  font-size: 14px;
  line-height: 20px;
}

.comments label svg {
  margin-left: 2px;
}

.comments textarea {
  height: 102px;
  margin-top: 6px;
  padding: 12px 15px;
  border: 1px solid #ebebeb;
  color: #666;
  font: 12px/18px "Noto Sans CJK KR", sans-serif;
  resize: none;
}

.comments textarea::placeholder {
  color: #777;
}

.comments button {
  align-self: flex-end;
  width: 70px;
  height: 38px;
  margin-top: 10px;
  border-radius: 3px;
  background: #3fb39b;
}

/* scroll bars */
.vscroll {
  display: flex;
  flex-direction: column;
  flex: none;
  width: 16px;
  background: #f0f0f0;
}

.vscroll .thumb {
  height: 640px;
  margin-bottom: auto;
  background: #cdcdcd;
}

.hscroll {
  display: flex;
  flex: none;
  height: 16px;
  padding: 1px 16px 0 0;
  background: #f0f0f0;
}

.hscroll .thumb {
  flex: 1;
  margin-right: 28px;
  background: #cdcdcd;
}

/* status bar */
.status {
  display: flex;
  flex: none;
  height: 27px;
  padding: 2px 4px 1px 0;
  border-top: 1px solid #d7d7d7;
  background: #f0f0f0;
  color: #333;
  font-family: "Noto Sans", sans-serif;
}

.cell {
  display: flex;
  align-items: center;
  gap: 5px;
  width: 178px;
  padding-left: 5px;
  border-right: 1px solid #d7d7d7;
}

.zoom {
  display: flex;
  align-items: center;
  gap: 6px;
  margin-left: auto;
  padding-left: 18px;
  border-left: 1px solid #d7d7d7;
}

.zoom input {
  width: 86px;
  height: 18px;
  margin: 0 4px;
  background: none;
  appearance: none;
}

.zoom input::-webkit-slider-runnable-track {
  height: 4px;
  border: 1px solid #d0d0d0;
  background: #e7eaea;
}

.zoom input::-webkit-slider-thumb {
  width: 10px;
  height: 17px;
  margin-top: -8px;
  background: #0078d7;
  clip-path: polygon(0 0, 100% 0, 100% 70%, 50% 100%, 0 70%);
  appearance: none;
}

/* task bar */
.taskbar {
  display: flex;
  justify-content: space-between;
  flex: none;
  height: 40px;
  background: linear-gradient(90deg, #1e222a 0, #1d2127 55%, #1c1c1c 70%, #351c1d 75%, #222124 78%, #2c1f20 82%, #1c1c1c 85%, #1c1e20 100%);
  color: #fff;
}

.tasks {
  display: flex;
}

.tasks button {
  display: flex;
  align-items: center;
  justify-content: center;
  position: relative;
  width: 49px;
}

.tasks .open::after {
  content: "";
  position: absolute;
  right: 4px;
  bottom: 0;
  left: 4px;
  height: 2px;
  background: #76b9ed;
}

.tasks .more::after {
  box-sizing: border-box;
  border-right: 8px solid #517da0;
}

.tasks .active {
  background: #464a51;
}

.tasks .active::after {
  right: 0;
  left: 0;
}

.player {
  display: flex;
  flex-direction: column;
  align-items: center;
  justify-content: space-between;
  width: 23px;
  height: 23px;
  padding-top: 2px;
  border-radius: 2px;
  background: #f2cb0c;
  color: #333;
  font: bold 6px/8px "Noto Sans", sans-serif;
}

.ps {
  width: 21px;
  height: 21px;
  border-radius: 3px;
  background: #001e36;
  color: #31a8ff;
  font: bold 12px/20px "Noto Sans", sans-serif;
}

.excel {
  display: flex;
  align-items: center;
}

.excel b {
  width: 13px;
  height: 22px;
  background: #1f7244;
  font: bold 13px/22px "Noto Sans", sans-serif;
}

.talk {
  display: flex;
  align-items: center;
  justify-content: center;
  position: relative;
  width: 24px;
  height: 24px;
  background: #ffe600;
}

.talk b {
  position: absolute;
  top: 6px;
  color: #ffe600;
  font: bold 6px/8px "Noto Sans", sans-serif;
}

.tray {
  display: flex;
  align-items: center;
  gap: 9px;
}

.tray time {
  width: 80px;
  padding-bottom: 2px;
  line-height: 18px;
  text-align: center;
}

.desktop {
  width: 5px;
  height: 40px;
  margin-left: 12px;
  border-left: 1px solid #777;
}

/* file menu */
.file-menu {
  position: absolute;
  top: 22px;
  left: 0;
  width: 525px;
  border: 1px solid #7a8ba8;
  background: #fbfcfe;
  box-shadow: 2px 2px 3px rgba(0, 0, 0, 0.12);
}

.file-head {
  height: 24px;
  margin-left: -1px;
  border-bottom: 1px solid #a9b5c9;
  background: #f5f6f7;
}

.file-head button {
  width: 56px;
  height: 23px;
  padding-bottom: 2px;
  background: #1368b3;
  color: #fff;
}

.file-body {
  display: flex;
  height: 495px;
  border-bottom: 1px solid #c5cfe0;
}

.commands {
  width: 223px;
  border-right: 1px solid #dbdfe6;
}

.commands button {
  display: flex;
  align-items: center;
  gap: 7px;
  width: 222px;
  height: 44px;
  padding: 0 0 2px 5px;
  border: 1px solid transparent;
  white-space: nowrap;
}

.commands button:disabled {
  color: #999;
}

.commands .open button {
  padding-bottom: 0;
  border-color: #a8c7e9;
  background: #ecf3fb;
}

.commands .divided::before {
  content: "";
  display: block;
  height: 1px;
  margin-left: 44px;
  border-top: 1px solid #d5d9df;
}

.arrow {
  display: flex;
  align-items: center;
  justify-content: center;
  width: 24px;
  height: 42px;
  margin-left: auto;
}

.open .arrow {
  border-left: 1px solid #a8c7e9;
}

.submenu {
  flex: 1;
  margin: 1px 1px 5px;
  border: 1px solid #dcdfe4;
  border-radius: 2px;
  box-shadow: 1px 2px 1px #e6e8ec;
}

.submenu h2 {
  height: 25px;
  padding-left: 8px;
  border-bottom: 1px solid #dcdfe4;
  background: #f5f6f7;
  line-height: 22px;
}

.submenu button {
  display: flex;
  gap: 8px;
  width: 100%;
  height: 59px;
  padding: 6px 0 0 7px;
  text-align: left;
}

.submenu button svg {
  margin-top: 4px;
}

.submenu b {
  display: block;
  margin-bottom: 3px;
  font-weight: 500;
}

.file-foot {
  height: 16px;
  background: #fff;
}
```
